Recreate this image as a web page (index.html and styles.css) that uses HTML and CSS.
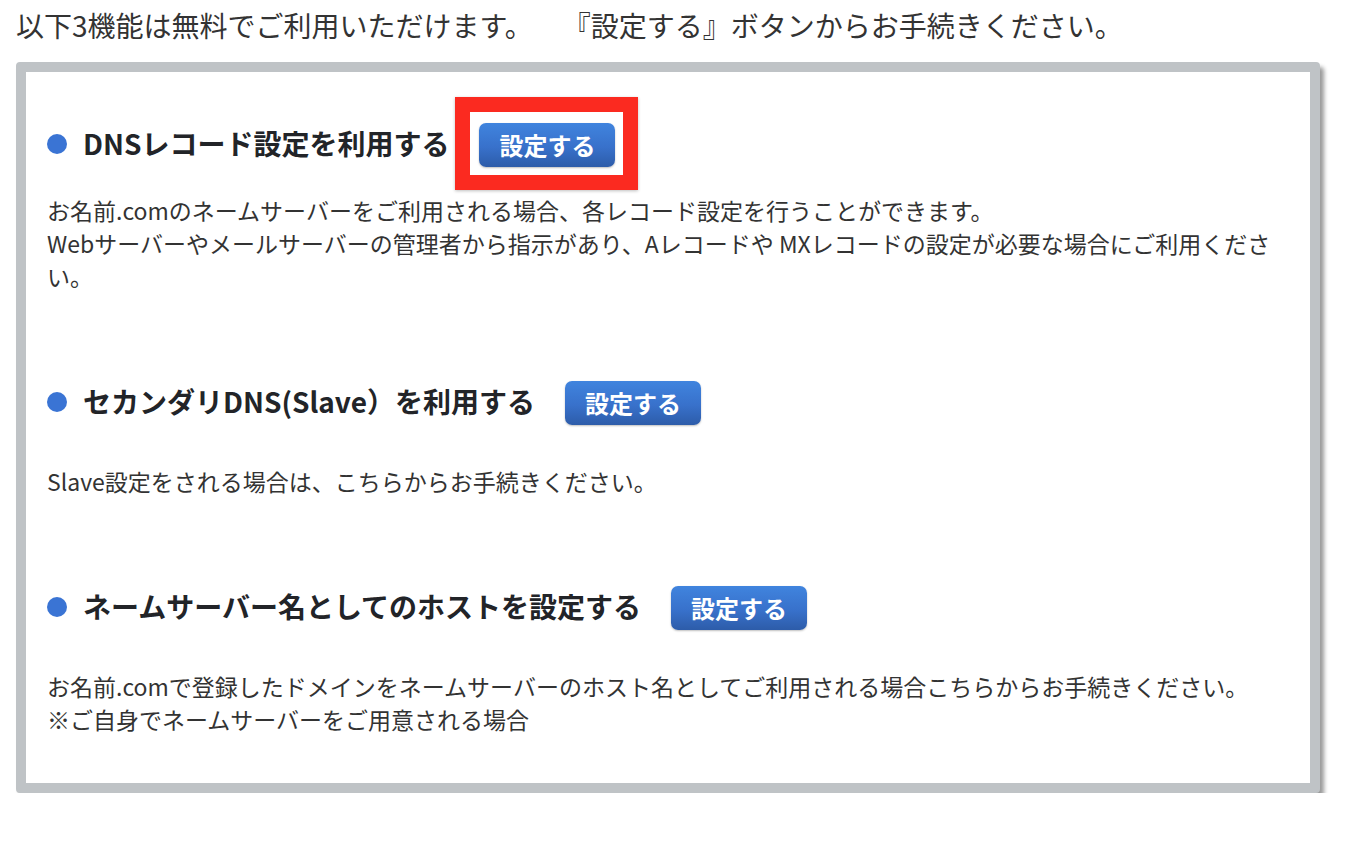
FILE: index.html
```html
<!DOCTYPE html>
<html lang="ja">
<head>
<meta charset="utf-8">
<title>DNS設定</title>
<link rel="stylesheet" href="styles.css">
</head>
<body>
<div class="page">
  <p class="intro"><span>以下3機能は無料でご利用いただけます。</span><span class="intro-second">『設定する』ボタンからお手続きください。</span></p>
  <div class="panel">
    <section class="feature feature--first">
      <div class="feature-head">
        <span class="dot"></span>
        <h2 class="feature-title">DNSレコード設定を利用する</h2>
        <span class="btn-wrap">
          <button class="btn" type="button">設定する</button>
          <span class="highlight"></span>
        </span>
      </div>
      <p class="feature-text">お名前.comのネームサーバーをご利用される場合、各レコード設定を行うことができます。<br>Webサーバーやメールサーバーの管理者から指示があり、Aレコードや MXレコードの設定が必要な場合にご利用ください。</p>
    </section>
    <section class="feature">
      <div class="feature-head">
        <span class="dot"></span>
        <h2 class="feature-title">セカンダリDNS(Slave）を利用する</h2>
        <span class="btn-wrap">
          <button class="btn" type="button">設定する</button>
        </span>
      </div>
      <p class="feature-text">Slave設定をされる場合は、こちらからお手続きください。</p>
    </section>
    <section class="feature">
      <div class="feature-head">
        <span class="dot"></span>
        <h2 class="feature-title">ネームサーバー名としてのホストを設定する</h2>
        <span class="btn-wrap">
          <button class="btn" type="button">設定する</button>
        </span>
      </div>
      <p class="feature-text">お名前.comで登録したドメインをネームサーバーのホスト名としてご利用される場合こちらからお手続きください。<br>※ご自身でネームサーバーをご用意される場合</p>
    </section>
  </div>
</div>
</body>
</html>
```

FILE: styles.css
```css
* { box-sizing: border-box; }

html, body {
  margin: 0;
  padding: 0;
  background: #ffffff;
}

body {
  font-family: "Noto Sans CJK JP", "Noto Sans", sans-serif;
  color: #333333;
}

.page {
  padding: 8px 44px 0 16px;
}

.intro {
  margin: 0;
  font-size: 28px;
  line-height: 34px;
  color: #333333;
  white-space: nowrap;
}

.intro-second {
  margin-left: 44px;
}

.panel {
  margin-top: 20px;
  width: 1304px;
  border: 10px solid #bfc3c6;
  border-radius: 4px;
  background: #ffffff;
  box-shadow: 4px 5px 4px rgba(0, 0, 0, 0.4);
  padding: 51px 20px 47px 21px;
  display: flex;
  flex-direction: column;
  gap: 88px;
}

.feature-head {
  display: flex;
  align-items: center;
  height: 44px;
}

.dot {
  width: 20px;
  height: 20px;
  border-radius: 50%;
  background: #3a74d4;
  flex: none;
  margin-top: -3px;
}

.feature-title {
  margin: -4px 0 0 16px;
  font-size: 28px;
  font-weight: 700;
  line-height: 40px;
  color: #222428;
}

.btn-wrap {
  position: relative;
  display: inline-flex;
  margin-left: 30px;
}

.btn {
  width: 136px;
  height: 44px;
  border: none;
  border-radius: 7px;
  background: linear-gradient(to bottom, #4084de 0%, #3871cb 55%, #2d5ca9 100%);
  box-shadow: 0 1px 2px rgba(0, 0, 0, 0.25);
  color: #ffffff;
  font-family: "Noto Sans CJK JP", "Noto Sans", sans-serif;
  font-size: 24px;
  font-weight: 700;
  line-height: 44px;
  padding: 0;
  cursor: pointer;
}

.highlight {
  position: absolute;
  top: -26px;
  left: -24px;
  right: -23px;
  bottom: -23px;
  border: 15px solid #fb2a20;
  box-shadow: 0 1px 3px rgba(0, 0, 0, 0.25);
  pointer-events: none;
}

.feature-text {
  margin: 40px 0 0 0;
  font-size: 23px;
  line-height: 33px;
  color: #333333;
}

.feature--first .feature-text {
  margin-top: 27px;
}
```
